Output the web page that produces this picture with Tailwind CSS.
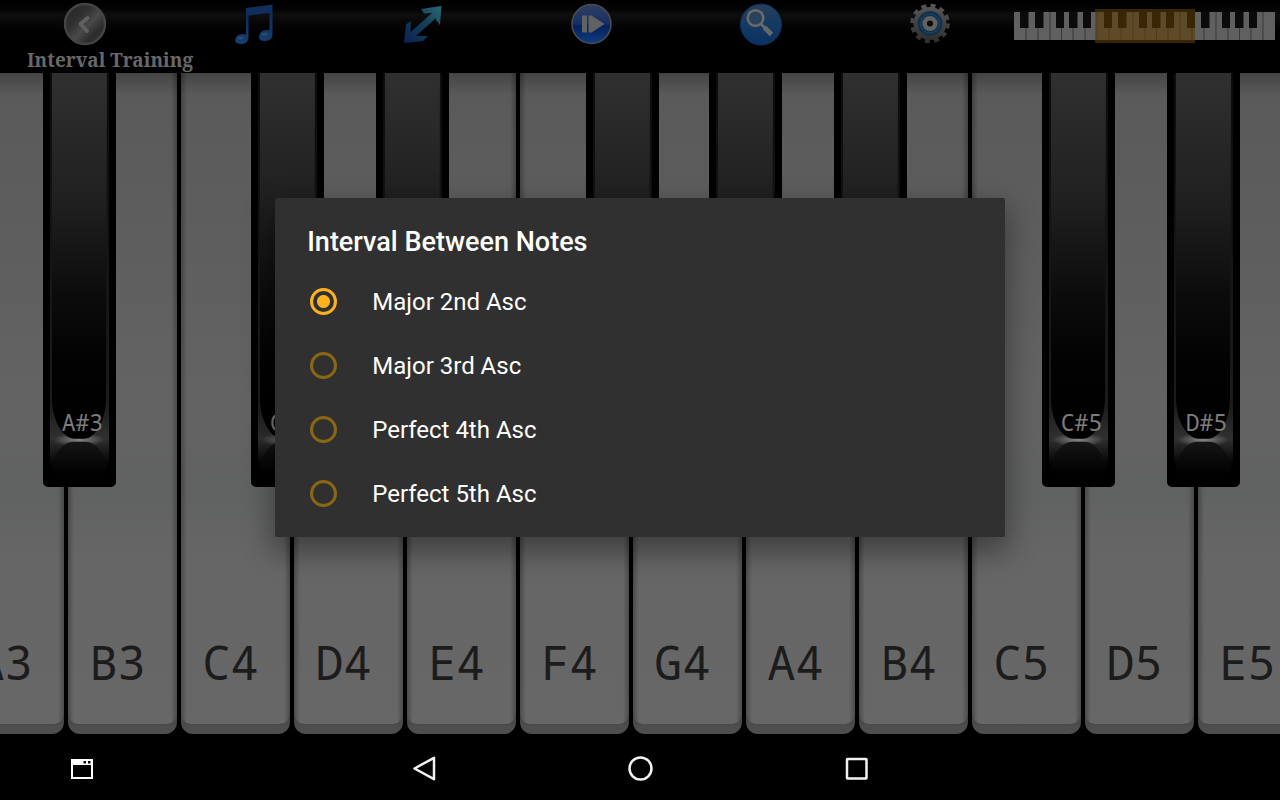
<!DOCTYPE html>
<html lang="en">
<head>
<meta charset="utf-8">
<meta name="viewport" content="width=device-width, initial-scale=1">
<title>Interval Training</title>
<script src="https://cdn.jsdelivr.net/npm/@tailwindcss/browser@4"></script>
</head>
<body class="bg-black">
<svg width="0" height="0" class="absolute" aria-hidden="true">
  <defs>
    <linearGradient id="face" x1="0" y1="0" x2="0" y2="1"><stop offset="0" stop-color="#303030"/><stop offset=".36" stop-color="#1f1f1f"/><stop offset=".62" stop-color="#0b0b0b"/><stop offset=".8" stop-color="#020202"/><stop offset="1" stop-color="#000"/></linearGradient>
    <linearGradient id="edge" x1="0" y1="0" x2="0" y2="1"><stop offset="0" stop-color="#0c0c0c"/><stop offset=".55" stop-color="#171717"/><stop offset=".83" stop-color="#1c1c1c"/><stop offset=".91" stop-color="#303030"/><stop offset=".97" stop-color="#060606"/><stop offset="1" stop-color="#000"/></linearGradient>
    <linearGradient id="dome" x1="0" y1="0" x2="0" y2="1"><stop offset="0" stop-color="#151515"/><stop offset="1" stop-color="#000"/></linearGradient>
    <radialGradient id="glow"><stop offset="0" stop-color="#888"/><stop offset="1" stop-color="#888" stop-opacity="0"/></radialGradient>
    <linearGradient id="steel" x1="0" y1="0" x2="1" y2="1"><stop offset="0" stop-color="#262626"/><stop offset=".35" stop-color="#303030"/><stop offset=".55" stop-color="#4a4a4a"/><stop offset=".75" stop-color="#2c2c2c"/><stop offset="1" stop-color="#3c3c3c"/></linearGradient>
    <linearGradient id="note" x1="0" y1="0" x2="0" y2="1"><stop offset="0" stop-color="#13305a"/><stop offset=".3" stop-color="#0d2d5c"/><stop offset="1" stop-color="#164070"/></linearGradient>
    <linearGradient id="arrow" x1="1" y1="0" x2="0" y2="1"><stop offset="0" stop-color="#296b76"/><stop offset=".45" stop-color="#133f58"/><stop offset="1" stop-color="#0b2156"/></linearGradient>
    <linearGradient id="play" x1="0" y1="0" x2="0" y2="1"><stop offset="0" stop-color="#303f5c"/><stop offset=".5" stop-color="#142f68"/><stop offset=".55" stop-color="#06205a"/><stop offset="1" stop-color="#103e80"/></linearGradient>
    <linearGradient id="lens" x1="0" y1="0" x2="0" y2="1"><stop offset="0" stop-color="#273f59"/><stop offset=".5" stop-color="#153a64"/><stop offset="1" stop-color="#0a325f"/></linearGradient>
    <linearGradient id="gear" x1="0" y1="0" x2="0" y2="1"><stop offset="0" stop-color="#555"/><stop offset="1" stop-color="#303030"/></linearGradient>
    <symbol id="blackkey" viewBox="0 0 73 414" preserveAspectRatio="none">
      <path d="M7 0H66V385Q66 396 60 402H13Q7 396 7 385Z" fill="url(#edge)"/>
      <ellipse cx="36" cy="367" rx="26" ry="7" fill="url(#glow)"/>
      <path d="M9 0H64L63 326C63 348 52 366 41 366H32C20 366 9 348 9 326Z" fill="url(#face)"/>
      <path d="M9 402V392C12 380 20 369 31 369H42C53 369 60 380 63 392V402Z" fill="url(#dome)"/>
    </symbol>
  </defs>
</svg>

<div class="flex h-screen flex-col overflow-hidden bg-black">
  <div class="relative flex min-h-0 flex-1 flex-col">
    <header class="h-[73px] shrink-0 bg-linear-to-b from-black via-[#0f0f0f] via-20% to-black to-65%">
      <div class="flex h-12 items-center pr-[5px]">
        <button class="flex flex-1 justify-center" aria-label="Back">
          <svg class="size-12" viewBox="0 0 48 48"><circle cx="24" cy="24" r="20" fill="url(#steel)" stroke="#454545" stroke-width="2.4"/><path d="M26.500 18L19.500 24L26 31" fill="none" stroke="#606060" stroke-width="3.800" stroke-linecap="round" stroke-linejoin="round"/></svg>
        </button>
        <button class="flex flex-1 justify-center" aria-label="Notes">
          <svg class="size-12" viewBox="0 0 48 48" fill="url(#note)"><path d="M16 8L42.500 4.500V35Q42 40 36 41Q29 41.500 29 37Q29 31 36 30Q38 29.500 39.500 30.500V13L18.500 15.500V38Q18 43 12 44Q5 44 5 40Q6 34 13 34Q15 34 16 35Z"/><ellipse cx="10.500" cy="38" rx="3" ry="1.600" fill="#275070"/><ellipse cx="34.500" cy="34" rx="3" ry="1.600" fill="#275070"/></svg>
        </button>
        <button class="flex flex-1 justify-center" aria-label="Range">
          <svg class="size-12" viewBox="0 0 48 48"><path d="M42.500 6L22 9L25 13.500L33 13L11.500 32L12 21L7 24.500L5 43L24 41L29 36L17 36L37 18V20L41 25Z" fill="url(#arrow)"/></svg>
        </button>
        <button class="flex flex-1 justify-center" aria-label="Play">
          <svg class="size-12" viewBox="0 0 48 48"><circle cx="23.500" cy="24" r="19.500" fill="url(#play)" stroke="#4a4a50" stroke-width="1.600"/><path d="M14 15.500H19V32.500H14ZM20.500 15.500H23.500L36.500 24L23.500 32.500H20.500Z" fill="#626262"/></svg>
        </button>
        <button class="flex flex-1 justify-center" aria-label="Search">
          <svg class="size-12" viewBox="0 0 48 48"><circle cx="24" cy="24.500" r="20.500" fill="url(#lens)" stroke="#0e3156"/><circle cx="18.500" cy="18" r="7.800" fill="#29435c" stroke="#6b6b6b" stroke-width="2.500"/><path d="M24 24L28 28" stroke="#6b6b6b" stroke-width="2.500"/><path d="M27.500 27.500L34.500 34.500" stroke="#696969" stroke-width="4.600"/></svg>
        </button>
        <button class="flex flex-1 justify-center" aria-label="Settings">
          <svg class="size-12" viewBox="0 0 48 48"><circle cx="24" cy="23.500" r="17.800" fill="none" stroke="url(#gear)" stroke-width="4" stroke-dasharray="5 4.320"/><circle cx="24" cy="23.500" r="16.500" fill="url(#gear)"/><circle cx="24" cy="23.500" r="12.500" fill="#12324e"/><circle cx="24" cy="23.500" r="9.500" fill="none" stroke="#204560"/><circle cx="24" cy="23.500" r="5.300" fill="#0a0a0a" stroke="#626262" stroke-width="4.600"/></svg>
        </button>
        <button class="h-12 w-[261px] shrink-0" aria-label="Keyboard position">
          <svg class="h-12 w-full" viewBox="0 0 261 48">
            <path d="M0 12H261V40H0Z" fill="#606060"/>
            <path d="M12 12V40M24 12V40M36 12V40M47.500 12V40M59 12V40M71 12V40M83 12V40M95 12V40M107 12V40M119 12V40M131 12V40M142.500 12V40M154 12V40M166 12V40M178 12V40M190 12V40M202 12V40M214 12V40M225.500 12V40M237 12V40M249 12V40" stroke="#393939"/>
            <path d="M6 12H14.500V28H6ZM21 12H29.500V28H21ZM42 12H50V28H42ZM55 12H63.500V28H55ZM69 12H77V28H69ZM90 12H98V28H90ZM104 12H112.500V28H104ZM125 12H133V28H125ZM138 12H146.500V28H138ZM152 12H160V28H152ZM173 12H181V28H173ZM187 12H195.500V28H187ZM208 12H216V28H208ZM221 12H229.500V28H221ZM235 12H243V28H235Z" fill="#0b0b0b"/>
            <path d="M81 9H181V43H81Z" fill="#5c3b00" fill-opacity=".58"/>
            <path d="M81 10.500H181M81 41.500H181" stroke="#382504" stroke-width="3"/>
          </svg>
        </button>
      </div>
      <h1 class="pl-[27px] font-['Noto_Serif','Droid_Serif','DejaVu_Serif_Condensed','DejaVu_Serif',serif] text-[19px] leading-6 font-bold text-[#686868]">Interval Training</h1>
    </header>

    <main class="min-h-0 flex-1 overflow-hidden pb-0.5">
      <div id="piano" class="-ml-[3.67%] grid h-full w-[105.94%] grid-cols-12 font-['Droid_Sans_Mono','Noto_Sans_Mono','DejaVu_Sans_Mono',monospace]"></div>
    </main>

    <div class="absolute inset-0 z-20 flex items-center justify-center pb-0.5">
      <section role="dialog" aria-labelledby="dialog-title" class="w-[57%] rounded-xs bg-[#303030] pt-6 pb-[11px] font-[Roboto,sans-serif] text-white shadow-[0_12px_28px_4px_rgba(0,0,0,0.35)]">
        <h2 id="dialog-title" class="mb-2 px-8 text-[27px] leading-10 font-medium">Interval Between Notes</h2>
        <label class="flex h-16 items-center gap-[35px] pl-[35px] text-2xl"><input type="radio" name="interval" checked class="size-[27px] appearance-none rounded-full border-3 border-[#8a6714] checked:border-[#ffb01d] checked:bg-[radial-gradient(circle,#ffb01d_6px,transparent_7px)]">Major 2nd Asc</label>
        <label class="flex h-16 items-center gap-[35px] pl-[35px] text-2xl"><input type="radio" name="interval" class="size-[27px] appearance-none rounded-full border-3 border-[#8a6714] checked:border-[#ffb01d] checked:bg-[radial-gradient(circle,#ffb01d_6px,transparent_7px)]">Major 3rd Asc</label>
        <label class="flex h-16 items-center gap-[35px] pl-[35px] text-2xl"><input type="radio" name="interval" class="size-[27px] appearance-none rounded-full border-3 border-[#8a6714] checked:border-[#ffb01d] checked:bg-[radial-gradient(circle,#ffb01d_6px,transparent_7px)]">Perfect 4th Asc</label>
        <label class="flex h-16 items-center gap-[35px] pl-[35px] text-2xl"><input type="radio" name="interval" class="size-[27px] appearance-none rounded-full border-3 border-[#8a6714] checked:border-[#ffb01d] checked:bg-[radial-gradient(circle,#ffb01d_6px,transparent_7px)]">Perfect 5th Asc</label>
      </section>
    </div>
  </div>

  <nav class="grid h-16 shrink-0 grid-cols-[12.8%_12%_16.8%_16.8%_16.8%_1fr] items-center bg-black">
    <button class="flex justify-center" aria-label="Windows"><svg class="size-8" viewBox="0 0 32 32"><path d="M5 7H27V27H5ZM7 13V25H25V13Z" fill="#fff" fill-rule="evenodd"/><path d="M17.500 9H20V11.500H17.500ZM22 9H24.500V11.500H22Z" fill="#000"/></svg></button>
    <span></span>
    <button class="flex justify-center" aria-label="Back"><svg class="size-8" viewBox="0 0 32 32"><path d="M25 5.800V27.200L5.500 16.500Z" fill="none" stroke="#f2f2f2" stroke-width="2.500" stroke-linejoin="round"/></svg></button>
    <button class="flex justify-center" aria-label="Home"><svg class="size-8" viewBox="0 0 32 32"><circle cx="16.500" cy="16.500" r="11" fill="none" stroke="#f2f2f2" stroke-width="2.500"/></svg></button>
    <button class="flex justify-center" aria-label="Recent apps"><svg class="size-8" viewBox="0 0 32 32"><rect x="8" y="7" width="19.500" height="19.500" rx=".5" fill="none" stroke="#f2f2f2" stroke-width="2.500"/></svg></button>
  </nav>
</div>

<script>
  // Each white key, with the sharp that overlaps its right edge and that sharp's left offset (% of key width).
  const keys = [
    ['A3', 'A#3', 79.6], ['B3'], ['C4', 'C#4', 63.7], ['D4', 'D#4', 74.3], ['E4'], ['F4', 'F#4', 60.2],
    ['G4', 'G#4', 69], ['A4', 'A#4', 79.6], ['B4'], ['C5', 'C#5', 63.7], ['D5', 'D#5', 74.3], ['E5']
  ];
  document.getElementById('piano').innerHTML = keys.map(([white, sharp, left]) => `
    <div class="relative px-0.5">
      <button class="flex h-full w-full flex-col rounded-b-xl bg-linear-to-b from-[#404040] from-97% to-[#4e4e4e] to-99% pb-[10px]">
        <span class="flex w-full flex-1 items-end justify-center rounded-b-[10px] bg-[linear-gradient(to_right,#0004,#0000_6px,#0000_calc(100%_-_6px),#0004),linear-gradient(#444,#5a5a5a_22px,#5d5e5d_25%,#636363_50%,#606261_64%,#666_75%,#676767)] pr-[10px] pb-[34px] text-[47px] leading-14 text-[#1c1c1c]">${white}</span>
      </button>
      ${sharp ? `<button class="absolute top-0 z-10 flex h-[62.6%] w-[64.6%] items-end justify-center overflow-hidden rounded-b-[5px] bg-black pb-[51px] pl-1.5 text-[23px] leading-7 text-[#7c7c7c]" style="left:${left}%">
        <svg class="absolute inset-0 size-full" preserveAspectRatio="none" aria-hidden="true"><use href="#blackkey" width="100%" height="100%"/></svg>
        <span class="relative">${sharp}</span>
      </button>` : ''}
    </div>`).join('');
</script>
</body>
</html>
